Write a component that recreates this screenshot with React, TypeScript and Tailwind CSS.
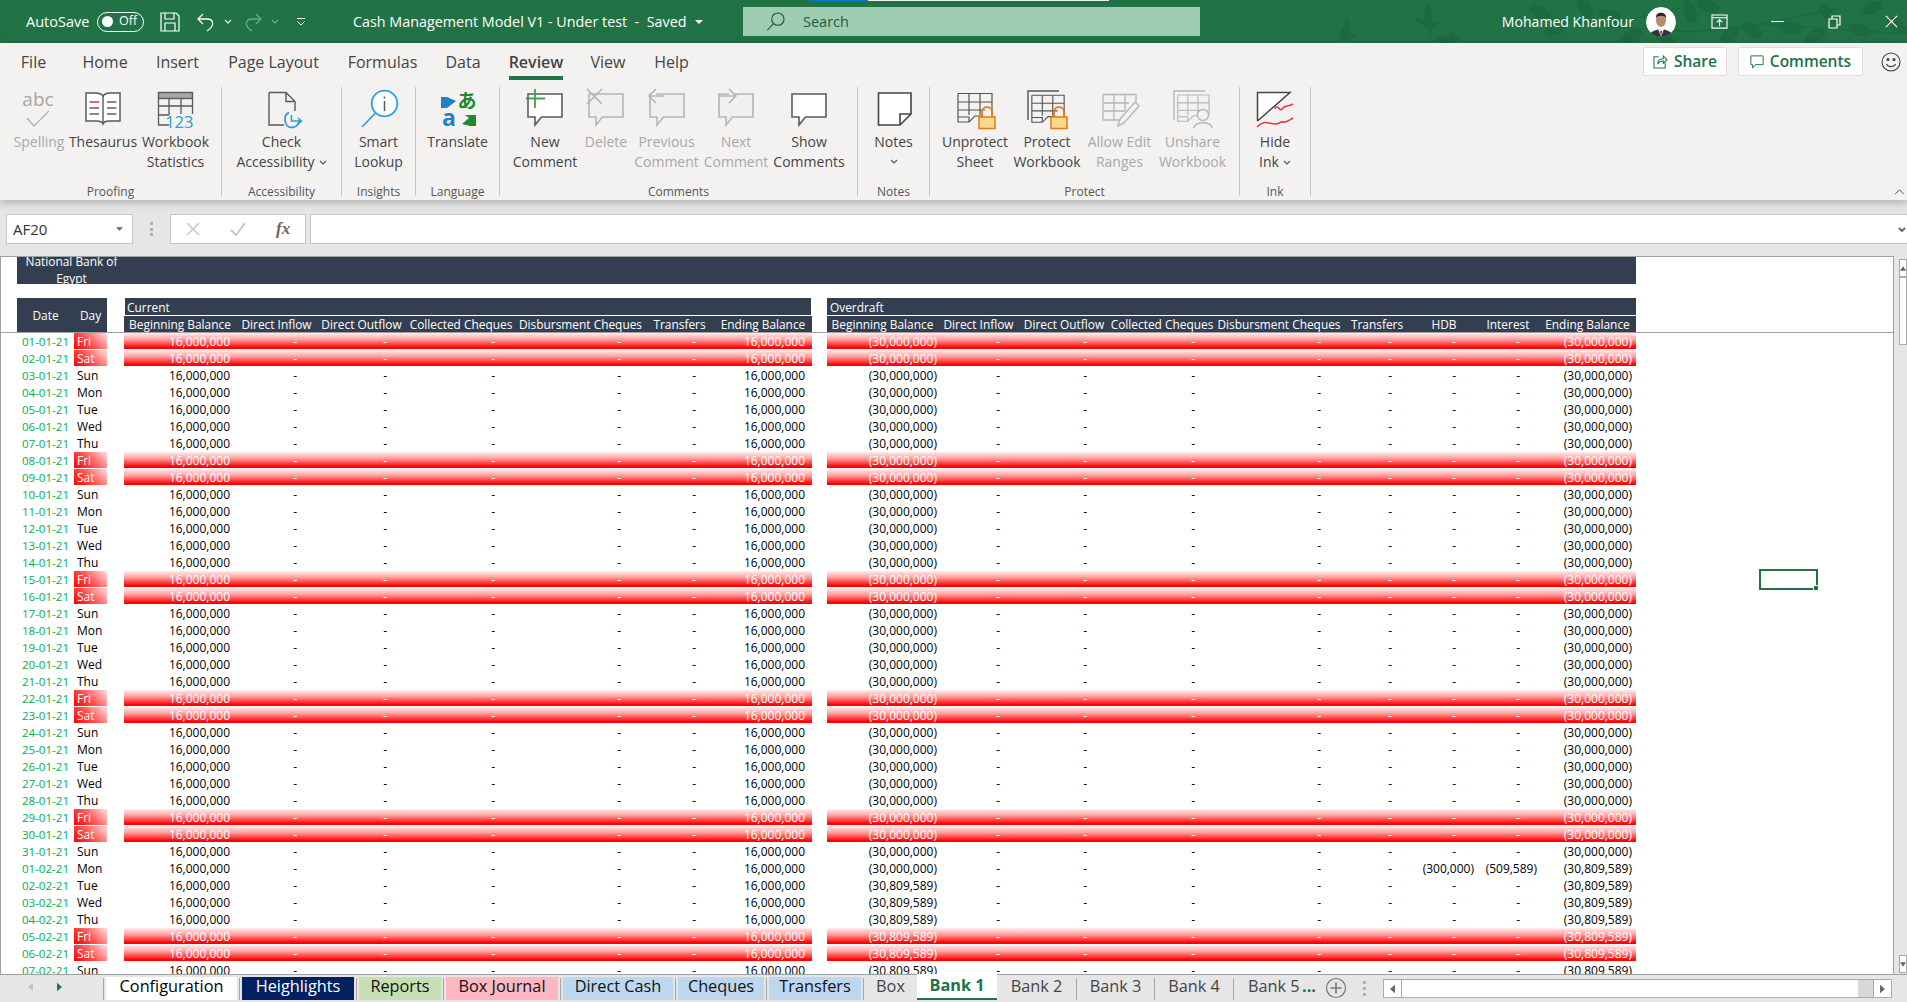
import React from "react";

const D = "#5a5a5a";
const G = "#b5b5b5";
const GF = "#f0f0f0";

function Svg({ children, className = "w-10 h-10 overflow-visible" }: { children: React.ReactNode; className?: string }) {
  return (
    <svg viewBox="0 0 40 40" className={className} fill="none" strokeWidth="1.4">
      {children}
    </svg>
  );
}

const Bubble = ({ c, f = "#ffffff" }: { c: string; f?: string }) => (
  <path d="M3 6H37V29H16.5L10 37V29H3Z" stroke={c} fill={f} strokeWidth="1.6" />
);

const SheetGrid = ({ c, fold = true }: { c: string; fold?: boolean }) => (
  <g stroke={c} strokeWidth="1.2">
    <path d="M3 5.5H37V27" fill="none" />
    <path d="M3 5.5V34H14L20 28H28" fill="none" />
    <path d="M3 14H37M3 22H30M14 5.5V27M25 5.5V27" />
    {fold && <path d="M3 29H14V34" />}
  </g>
);

const Lock = () => (
  <g>
    <path d="M27 29V24C27 17.5 37 17.5 37 24V29" stroke="#e57b13" strokeWidth="1.8" fill="none" />
    <rect x="24" y="29" width="16" height="11.5" fill="#fbd98c" stroke="#e57b13" strokeWidth="1.5" />
  </g>
);

const icons: Record<string, React.ReactNode> = {
  spelling: (
    <Svg>
      <text x="19" y="18" textAnchor="middle" fontSize="19" fill="#a6a6a6" stroke="none" fontFamily="Open Sans">abc</text>
      <path d="M8 30L15 38L30 23" stroke="#b0b0b0" strokeWidth="1.3" />
    </Svg>
  ),
  thesaurus: (
    <Svg>
      <path d="M20 8C18 5.5 16 5 13 5H3V33H14C17 33 19 34 20 36C21 34 23 33 26 33H37V5H27C24 5 22 5.5 20 8Z" stroke={D} strokeWidth="1.5" fill="#fff" />
      <path d="M20 8V35" stroke={D} />
      <path d="M6.5 14H16" stroke="#e8606a" strokeWidth="2" />
      <path d="M6.5 20H16M6.5 26H16M24 14H33.5M24 20H33.5M24 26H33.5" stroke="#8a8a8a" strokeWidth="1.8" />
    </Svg>
  ),
  stats: (
    <Svg>
      <rect x="2.5" y="4.5" width="34" height="6" fill="#a6a6a6" stroke={D} />
      <path d="M2.5 10V37H13M36.5 10V26M2.5 18H36.5M2.5 27H13M13 10V27M25 10V26" stroke={D} strokeWidth="1.3" />
      <rect x="13.5" y="27.5" width="25" height="12" fill="#f3f2f1" />
      <text x="37.5" y="39.5" textAnchor="end" fontSize="16.5" fill="#2e9bd6" stroke="none" fontFamily="Open Sans">123</text>
    </Svg>
  ),
  access: (
    <Svg>
      <path d="M7 4.5H24L33 13.5V23M22 37H7V4.5M24 4.5V13.5H33" stroke={D} strokeWidth="1.4" />
      <path d="M27 25C21 25 21.5 39.5 29.5 39.5C34 39.5 36.5 37 37 33" stroke="#2e9bd6" strokeWidth="1.8" />
      <path d="M29.5 27V33H39M36 30L39.5 33L36 36" stroke="#2e9bd6" strokeWidth="1.6" />
    </Svg>
  ),
  smart: (
    <Svg>
      <circle cx="25.5" cy="15.5" r="12.8" stroke="#2f9fe0" strokeWidth="1.8" fill="#fff" />
      <path d="M16.5 25L3 39" stroke="#2f9fe0" strokeWidth="1.8" />
      <path d="M25.5 13V23" stroke={D} strokeWidth="1.5" />
      <circle cx="25.5" cy="9.5" r="1" fill={D} />
    </Svg>
  ),
  translate: (
    <Svg>
      <path d="M3 9H9L18 13L9 20H3Z" fill="#1f7fc9" />
      <text x="29" y="20" textAnchor="middle" fontSize="19" fill="#1e8a2c" stroke="none" fontFamily="Noto Sans CJK JP" fontWeight="700">あ</text>
      <text x="11" y="38" textAnchor="middle" fontSize="23" fill="#1f7fc9" stroke="none" fontFamily="Open Sans" fontWeight="700">a</text>
      <path d="M24 36L31 30L27 27H38V38H32Z" fill="#1e8a2c" />
    </Svg>
  ),
  newc: (
    <Svg>
      <Bubble c={D} />
      <path d="M10 1V20M1 10.5H20" stroke="#3fa34d" strokeWidth="1.8" />
    </Svg>
  ),
  del: (
    <Svg>
      <Bubble c={G} f={GF} />
      <path d="M1 1L16 16M16 1L1 16" stroke={G} strokeWidth="1.6" />
    </Svg>
  ),
  prev: (
    <Svg>
      <Bubble c={G} f={GF} />
      <path d="M17 8H3M9 1L2 8L9 15" stroke={G} strokeWidth="1.6" fill={GF} />
    </Svg>
  ),
  next: (
    <Svg>
      <Bubble c={G} f={GF} />
      <path d="M3 8H19M13 1L20 8L13 15" stroke={G} strokeWidth="1.6" fill={GF} />
    </Svg>
  ),
  show: (
    <Svg>
      <Bubble c={D} />
    </Svg>
  ),
  note: (
    <Svg>
      <path d="M4.5 5H37V26L26 37H4.5Z" stroke="#444" strokeWidth="1.6" fill="#fff" />
      <path d="M37 26H26V37" stroke="#444" strokeWidth="1.6" />
    </Svg>
  ),
  unprotect: (
    <Svg>
      <SheetGrid c="#555" />
      <Lock />
    </Svg>
  ),
  protect: (
    <Svg>
      <path d="M1 32V3H32" stroke="#555" strokeWidth="1.4" />
      <g transform="translate(2 2) scale(0.95)">
        <SheetGrid c="#555" />
      </g>
      <Lock />
    </Svg>
  ),
  allow: (
    <Svg>
      <g stroke={G} strokeWidth="1.3">
        <path d="M3 6.5H36V14M3 6.5V32H19M3 15H29M3 23H24M14 6.5V32M25 6.5V24" />
      </g>
      <path d="M35 14L39 18L24 35L18 38L20 31Z" stroke={G} strokeWidth="1.4" fill="#f3f2f1" />
    </Svg>
  ),
  unshare: (
    <Svg>
      <path d="M1 32V3H32" stroke={G} strokeWidth="1.3" />
      <g transform="translate(2 2) scale(0.92)">
        <SheetGrid c={G} />
      </g>
      <circle cx="30" cy="27" r="5.5" stroke={G} strokeWidth="1.4" fill="#f3f2f1" />
      <path d="M21 40C21 33 39 33 39 40" stroke={G} strokeWidth="1.4" fill="#f3f2f1" />
    </Svg>
  ),
  ink: (
    <Svg>
      <path d="M2.5 33V4.5H35L2.5 33" stroke="#444" strokeWidth="1.5" fill="#fff" />
      <path d="M20 21C22 14 25 26 28 20C30 17 33 19 38 16" stroke="#e8383d" strokeWidth="1.6" />
      <path d="M2 39C10 31 14 36 20 36C25 36 25 33 28 34C31 35 33 33 38 30" stroke="#e8383d" strokeWidth="1.6" />
    </Svg>
  ),
};

const Chev = ({ className = "" }: { className?: string }) => (
  <svg viewBox="0 0 8 5" className={"w-[8px] h-[5px] " + className} fill="none" stroke="#555" strokeWidth="1.1">
    <path d="M1 1L4 4L7 1" />
  </svg>
);

type Item = { icon: string; l1: string; l2?: React.ReactNode; w: string; off?: boolean };
type Group = { name: string; w: string; pl: string; items: Item[] };

const groups: Group[] = [
  {
    name: "Proofing", w: "w-[222px]", pl: "pl-[8px]",
    items: [
      { icon: "spelling", l1: "Spelling", w: "w-[62px]", off: true },
      { icon: "thesaurus", l1: "Thesaurus", w: "w-[66px]" },
      { icon: "stats", l1: "Workbook", l2: "Statistics", w: "w-[79px]" },
    ],
  },
  {
    name: "Accessibility", w: "w-[120px]", pl: "pl-0",
    items: [{ icon: "access", l1: "Check", l2: <span className="flex items-center gap-[4px]">Accessibility<Chev /></span>, w: "w-[119px]" }],
  },
  { name: "Insights", w: "w-[74px]", pl: "pl-0", items: [{ icon: "smart", l1: "Smart", l2: "Lookup", w: "w-[73px]" }] },
  { name: "Language", w: "w-[84px]", pl: "pl-0", items: [{ icon: "translate", l1: "Translate", w: "w-[83px]" }] },
  {
    name: "Comments", w: "w-[358px]", pl: "pl-[17px]",
    items: [
      { icon: "newc", l1: "New", l2: "Comment", w: "w-[56px]" },
      { icon: "del", l1: "Delete", w: "w-[66px]", off: true },
      { icon: "prev", l1: "Previous", l2: "Comment", w: "w-[55px]", off: true },
      { icon: "next", l1: "Next", l2: "Comment", w: "w-[84px]", off: true },
      { icon: "show", l1: "Show", l2: "Comments", w: "w-[62px]" },
    ],
  },
  { name: "Notes", w: "w-[72px]", pl: "pl-0", items: [{ icon: "note", l1: "Notes", l2: <Chev className="mt-[7px]" />, w: "w-[71px]" }] },
  {
    name: "Protect", w: "w-[310px]", pl: "pl-[9px]",
    items: [
      { icon: "unprotect", l1: "Unprotect", l2: "Sheet", w: "w-[72px]" },
      { icon: "protect", l1: "Protect", l2: "Workbook", w: "w-[72px]" },
      { icon: "allow", l1: "Allow Edit", l2: "Ranges", w: "w-[73px]", off: true },
      { icon: "unshare", l1: "Unshare", l2: "Workbook", w: "w-[73px]", off: true },
    ],
  },
  { name: "Ink", w: "w-[71px]", pl: "pl-0", items: [{ icon: "ink", l1: "Hide", l2: <span className="flex items-center gap-[4px]">Ink<Chev /></span>, w: "w-[70px]" }] },
];

const tabs = [
  { t: "File", w: "w-[67px]" },
  { t: "Home", w: "w-[76px]" },
  { t: "Insert", w: "w-[69px]" },
  { t: "Page Layout", w: "w-[123px]" },
  { t: "Formulas", w: "w-[95px]" },
  { t: "Data", w: "w-[66px]" },
  { t: "Review", w: "w-[80px]", active: true },
  { t: "View", w: "w-[64px]" },
  { t: "Help", w: "w-[63px]" },
];

function TitleBar() {
  const leaves = [
    [1540, 12, 30], [1556, 28, -30], [1585, 8, 60], [1610, 16, 20], [1632, 36, -20], [1665, 38, 40], [1690, 12, 70],
    [1708, 6, 20], [1730, 34, -40], [1752, 30, 30], [1790, 28, 10], [1815, 36, -30], [1828, 14, 50], [1860, 30, 20],
    [1872, 8, -20], [1898, 26, 40],
  ];
  return (
    <div className="relative h-[43px] bg-[#217346] flex items-center text-white text-[14.5px] shrink-0 overflow-hidden">
      <svg className="absolute inset-0 w-[1907px] h-[43px]" viewBox="0 0 1907 43" fill="#1d6a3f">
        <path d="M1338 36C1342 30 1345 26 1346 18C1350 23 1352 28 1350 32L1358 36L1348 38L1344 42Z" />
        <path d="M1413 18L1424 20L1426 4C1432 8 1434 14 1432 21L1442 22L1434 26L1430 36L1425 27Z" />
        <path d="M1436 38L1448 36L1454 30L1456 36L1462 38L1452 43H1440Z" />
        <path d="M1520 26L1560 18L1600 26L1680 8M1600 26L1690 32L1760 24L1907 34M1760 24L1840 8" stroke="#1d6a3f" strokeWidth="1.5" fill="none" />
        {leaves.map(([x, y, r], i) => (
          <ellipse key={i} cx={x} cy={y} rx="12" ry="6" transform={`rotate(${r} ${x} ${y})`} />
        ))}
      </svg>
      <div className="absolute top-0 left-[809px] h-[1px] w-[59px] bg-[#0078d4]" />
      <div className="absolute top-0 left-[868px] h-[1px] w-[241px] bg-[#f0f0f0]" />
      <div className="relative flex items-center w-full">
        <span className="ml-[26px] w-[63px] whitespace-nowrap">AutoSave</span>
        <span className="ml-[8px] w-[47px] h-[20px] rounded-full border border-white flex items-center">
          <span className="ml-[4px] w-[11px] h-[11px] rounded-full bg-white" />
          <span className="ml-[6px] text-[12.5px] leading-none">Off</span>
        </span>
        <svg viewBox="0 0 20 20" className="ml-[16px] w-[20px] h-[20px]" fill="none" stroke="#fff" strokeWidth="1.2">
          <path d="M1 1H16L19 4V19H1Z" />
          <path d="M5 1V7H14V1M5 19V11H15V19" />
        </svg>
        <svg viewBox="0 0 20 20" className="ml-[16px] w-[20px] h-[20px]" fill="none" stroke="#fff" strokeWidth="1.3">
          <path d="M7 2L2 7L7 12" />
          <path d="M2 7H11C18 7 19 14 11 19" />
        </svg>
        <Chev className="ml-[8px] [&_path]:stroke-white" />
        <svg viewBox="0 0 20 20" className="ml-[11px] w-[20px] h-[20px]" fill="none" stroke="#6fa88a" strokeWidth="1.3">
          <path d="M13 2L18 7L13 12" />
          <path d="M18 7H9C2 7 1 14 9 19" />
        </svg>
        <Chev className="ml-[8px] opacity-40 [&_path]:stroke-white" />
        <svg viewBox="0 0 10 10" className="ml-[17px] w-[10px] h-[10px]" fill="none" stroke="#fff" strokeWidth="1">
          <path d="M1 1.5H9M1.5 4.5L5 8L8.5 4.5" />
        </svg>
        <span className="ml-[47px] w-[342px] whitespace-nowrap text-[14.35px]">Cash Management Model V1 - Under test&nbsp; -&nbsp; Saved</span>
        <svg viewBox="0 0 8 4" className="w-[8px] h-[4px]" fill="#fff">
          <path d="M0 0H8L4 4Z" />
        </svg>
        <div className="ml-[40px] w-[457px] h-[29px] bg-[#9fcdb3] flex items-center text-[#1f5c3a]">
          <svg viewBox="0 0 20 20" className="ml-[23px] w-[19px] h-[19px]" fill="none" stroke="#1f5c3a" strokeWidth="1.2">
            <circle cx="12.5" cy="7.5" r="6.5" />
            <path d="M8 12L1.5 19" />
          </svg>
          <span className="ml-[18px]">Search</span>
        </div>
        <span className="ml-auto whitespace-nowrap text-[14.1px]">Mohamed Khanfour</span>
        <svg viewBox="0 0 30 30" className="ml-[12px] w-[30px] h-[30px] rounded-full">
          <circle cx="15" cy="15" r="15" fill="#fff" />
          <path d="M3 30C4 24 9 23 15 22C21 23 26 24 27 30Z" fill="#32343a" />
          <path d="M12 22L15 30L18 22Z" fill="#e8e8e8" />
          <path d="M14.2 24L15 30L15.8 24Z" fill="#22242a" />
          <ellipse cx="15" cy="13" rx="5" ry="7" fill="#b98a6c" />
          <path d="M10 11C9 4 21 4 20 11C19 8 11 8 10 11Z" fill="#2a2320" />
        </svg>
        <svg viewBox="0 0 18 16" className="ml-[35px] w-[17px] h-[15px]" fill="none" stroke="#fff" strokeWidth="1.2">
          <path d="M1 1H17V15H1ZM1 4H17" />
          <path d="M9 13V6M6 9L9 6L12 9" />
        </svg>
        <span className="ml-[43px] w-[13px] h-[1.5px] bg-white" />
        <svg viewBox="0 0 13 14" className="ml-[44px] w-[13px] h-[14px]" fill="none" stroke="#fff" strokeWidth="1.2">
          <path d="M1 4H9V13H1ZM4 4V1H12V10H9" />
        </svg>
        <svg viewBox="0 0 14 14" className="ml-[44px] mr-[9px] w-[13px] h-[13px]" fill="none" stroke="#fff" strokeWidth="1.2">
          <path d="M1 1L13 13M13 1L1 13" />
        </svg>
      </div>
    </div>
  );
}

function Ribbon() {
  return (
    <div className="relative z-10 h-[157px] bg-[#f3f2f1] shadow-[0_2px_9px_rgba(0,0,0,0.28)] shrink-0">
      <div className="h-[39px] flex items-start text-[16px] text-[#444444]">
        {tabs.map((t) => (
          <div key={t.t} className={t.w + " flex justify-center"}>
            <span className={"h-[37px] leading-[38px] whitespace-nowrap " + (t.active ? "font-semibold border-b-[4px] border-[#217346]" : "")}>{t.t}</span>
          </div>
        ))}
        <div className="ml-auto flex items-center pt-[4px]">
          <button className="w-[84px] h-[29px] bg-white border border-[#e1dfdd] rounded-[2px] flex items-center justify-center gap-[6px] text-[#217346] font-semibold text-[15.5px]">
            <svg viewBox="0 0 16 16" className="w-[15px] h-[15px]" fill="none" stroke="#217346" strokeWidth="1.1">
              <path d="M6 3H1V15H13V9M5 11C5 6 8 5 11 5V2L15 6L11 10V7.5C8.5 7.5 6.5 8 5 11Z" />
            </svg>
            Share
          </button>
          <button className="ml-[11px] w-[125px] h-[29px] bg-white border border-[#e1dfdd] rounded-[2px] flex items-center justify-center gap-[6px] text-[#217346] font-semibold text-[15.5px]">
            <svg viewBox="0 0 16 16" className="w-[14px] h-[14px]" fill="none" stroke="#217346" strokeWidth="1.1">
              <path d="M1 1H15V11H6L3 15V11H1Z" />
            </svg>
            Comments
          </button>
          <svg viewBox="0 0 20 20" className="ml-[18px] mr-[6px] w-[20px] h-[20px]" fill="none" stroke="#444" strokeWidth="1.1">
            <circle cx="10" cy="10" r="9" />
            <path d="M5.5 12C7 15.5 13 15.5 14.5 12" />
            <circle cx="7" cy="7.5" r="1" fill="#444" />
            <circle cx="13" cy="7.5" r="1" fill="#444" />
          </svg>
        </div>
      </div>
      <div className="flex pt-[5px] text-[14px] leading-[20px] text-[#444444]">
        {groups.map((g) => (
          <div key={g.name} className={g.w + " h-[109px] border-r border-[#c8c6c4] shrink-0"}>
            <div className={"h-[97px] flex " + g.pl}>
              {g.items.map((it) => (
                <div key={it.l1 + it.icon} className={it.w + " flex flex-col items-center whitespace-nowrap shrink-0 " + (it.off ? "text-[#a8a8a8]" : "")}>
                  <div className="h-[45px] pt-[1px]">{icons[it.icon]}</div>
                  <span>{it.l1}</span>
                  {it.l2 && <span className="flex flex-col items-center">{it.l2}</span>}
                </div>
              ))}
            </div>
            <div className="h-[12px] leading-[16px] text-center text-[12px] text-[#555555]">{g.name}</div>
          </div>
        ))}
      </div>
      <svg viewBox="0 0 12 7" className="absolute right-[2px] bottom-[5px] w-[11px] h-[6px]" fill="none" stroke="#444" strokeWidth="1.1">
        <path d="M1 6L6 1L11 6" />
      </svg>
    </div>
  );
}

function FormulaBar() {
  return (
    <div className="h-[56px] bg-[#e6e6e6] pt-[14px] flex items-start shrink-0">
      <div className="ml-[6px] w-[127px] h-[30px] bg-white border border-[#c6c6c6] flex items-center text-[15px] text-[#333333]">
        <span className="ml-[6px]">AF20</span>
        <svg viewBox="0 0 8 4" className="ml-auto mr-[9px] w-[7px] h-[4px]" fill="#666">
          <path d="M0 0H8L4 4Z" />
        </svg>
      </div>
      <div className="ml-[17px] mt-[8px] w-[3px] h-[14px] flex flex-col justify-between">
        <span className="h-[3px] bg-[#b0b0b0]" />
        <span className="h-[3px] bg-[#b0b0b0]" />
        <span className="h-[3px] bg-[#b0b0b0]" />
      </div>
      <div className="ml-[17px] w-[136px] h-[30px] bg-white border border-[#c6c6c6] flex items-center">
        <svg viewBox="0 0 14 14" className="ml-[15px] w-[14px] h-[14px]" fill="none" stroke="#c8c8c8" strokeWidth="1.6">
          <path d="M1 1L13 13M13 1L1 13" />
        </svg>
        <svg viewBox="0 0 16 14" className="ml-[30px] w-[16px] h-[14px]" fill="none" stroke="#c8c8c8" strokeWidth="2">
          <path d="M1 8L6 13L15 1" />
        </svg>
        <span className="ml-[30px] text-[17px] italic font-['Liberation_Serif',serif] text-[#666666] font-bold">fx</span>
      </div>
      <div className="ml-[4px] flex-1 h-[30px] bg-white border-y border-l border-[#c6c6c6] flex items-center justify-end">
        <svg viewBox="0 0 8 5" className="mr-[1px] w-[8px] h-[5px]" fill="none" stroke="#666" strokeWidth="2">
          <path d="M1 1L4 4L7 1" />
        </svg>
      </div>
    </div>
  );
}

const curCols = [
  { h: "Beginning Balance", w: "w-[112px]", pr: "pr-[6px]" },
  { h: "Direct Inflow", w: "w-[81px]", pr: "pr-[20px]" },
  { h: "Direct Outflow", w: "w-[89px]", pr: "pr-[19px]" },
  { h: "Collected Cheques", w: "w-[110px]", pr: "pr-[21px]" },
  { h: "Disbursment Cheques", w: "w-[129px]", pr: "pr-[24px]" },
  { h: "Transfers", w: "w-[69px]", pr: "pr-[18px]" },
  { h: "Ending Balance", w: "w-[98px]", pr: "pr-[7px]" },
];
const odCols = [
  { h: "Beginning Balance", w: "w-[111px]", pr: "pr-[1px]" },
  { h: "Direct Inflow", w: "w-[81px]", pr: "pr-[19px]" },
  { h: "Direct Outflow", w: "w-[90px]", pr: "pr-[22px]" },
  { h: "Collected Cheques", w: "w-[106px]", pr: "pr-[20px]" },
  { h: "Disbursment Cheques", w: "w-[128px]", pr: "pr-[22px]" },
  { h: "Transfers", w: "w-[68px]", pr: "pr-[19px]" },
  { h: "HDB", w: "w-[66px]", pr: "pr-[21px]", vpr: "pr-[3px]" },
  { h: "Interest", w: "w-[62px]", pr: "pr-[19px]", vpr: "pr-[2px]" },
  { h: "Ending Balance", w: "w-[97px]", pr: "pr-[4px]" },
];

const pad = (n: number) => String(n).padStart(2, "0");
const days = ["Sun", "Mon", "Tue", "Wed", "Thu", "Fri", "Sat"];
const rows = Array.from({ length: 38 }, (_, i) => {
  const d = new Date(Date.UTC(2021, 0, 1 + i));
  const day = days[d.getUTCDay()];
  return {
    i,
    date: `${pad(d.getUTCDate())}-${pad(d.getUTCMonth() + 1)}-21`,
    day,
    off: day === "Fri" || day === "Sat",
  };
});

const RED = "bg-[linear-gradient(180deg,#ffeeee_0%,#ffa0a0_40%,#ff0000_92%)] text-white";

function Row({ r }: { r: (typeof rows)[number] }) {
  const begin = r.i <= 31 ? "(30,000,000)" : "(30,809,589)";
  const end = r.i < 31 ? "(30,000,000)" : "(30,809,589)";
  const od = [begin, "-", "-", "-", "-", "-", r.i === 31 ? "(300,000)" : "-", r.i === 31 ? "(509,589)" : "-", end];
  const cur = ["16,000,000", "-", "-", "-", "-", "-", "16,000,000"];
  const tone = r.off ? RED : "text-black";
  return (
    <div className="flex h-[17px] pl-[16px] leading-[18px] whitespace-nowrap text-[12px]">
      <div className="w-[57px] text-center text-[#00b050] text-[11.6px]">{r.date}</div>
      <div className={"w-[33px] h-[16px] pl-[3px] " + (r.off ? "bg-[linear-gradient(45deg,#ff0000_0%,#ff5050_45%,#ffe0e0_100%)] text-white" : "text-black")}>{r.day}</div>
      <div className={"ml-[17px] w-[688px] h-[16px] flex " + tone}>
        {cur.map((v, i) => (
          <div key={i} className={curCols[i].w + " text-right " + curCols[i].pr}>{v}</div>
        ))}
      </div>
      <div className={"ml-[15px] w-[809px] h-[16px] flex " + tone}>
        {od.map((v, i) => {
          const c = odCols[i];
          return (
            <div key={i} className={c.w + " text-right " + (v !== "-" && c.vpr ? c.vpr : c.pr)}>{v}</div>
          );
        })}
      </div>
    </div>
  );
}

const V = ({ up }: { up?: boolean }) => (
  <div className="h-[18px] bg-white border border-[#ababab] flex items-center justify-center shrink-0">
    <svg viewBox="0 0 8 6" className="w-[6px] h-[5px]" fill="#666">
      <path d={up ? "M4 0L8 6H0Z" : "M0 0H8L4 6Z"} />
    </svg>
  </div>
);

function Sheet() {
  return (
    <div className="h-[718px] flex bg-[#e6e6e6] shrink-0">
      <div className="relative w-[1894px] border-t border-x border-[#a0a0a0] bg-white overflow-hidden text-[11.9px] font-['Open_Sans',sans-serif]">
        <div className="ml-[16px] w-[1619px] h-[27px] bg-[#333f50] overflow-hidden text-white">
          <div className="w-[109px] text-center leading-[17px] -mt-[4px]">
            National Bank of
            <br />
            Egypt
          </div>
        </div>
        <div className="mt-[14px] h-[35px] pl-[16px] flex border-b border-[#a0a0a0] text-white whitespace-nowrap">
          <div className="w-[90px] h-[34px] bg-[#333f50] flex items-center pt-[2px]">
            <span className="w-[57px] text-center">Date</span>
            <span className="w-[33px] text-center">Day</span>
          </div>
          <div className="ml-[17px] w-[688px]">
            <div className="mx-[1px] h-[17px] mb-[1px] bg-[#333f50] pl-[2px] leading-[19px]">Current</div>
            <div className="h-[16px] bg-[#333f50] flex leading-[17px]">
              {curCols.map((c) => (
                <div key={c.h} className={c.w + " text-center"}>{c.h}</div>
              ))}
            </div>
          </div>
          <div className="ml-[15px] w-[809px]">
            <div className="h-[17px] mb-[1px] bg-[#333f50] pl-[3px] leading-[19px]">Overdraft</div>
            <div className="h-[16px] bg-[#333f50] flex leading-[17px]">
              {odCols.map((c) => (
                <div key={c.h} className={c.w + " text-center"}>{c.h}</div>
              ))}
            </div>
          </div>
        </div>
        {rows.map((r) => (
          <Row key={r.i} r={r} />
        ))}
        <div className="absolute left-[1758px] top-[312px] w-[59px] h-[21px] border-2 border-[#217346]">
          <div className="absolute -right-[3px] -bottom-[3px] w-[6px] h-[6px] bg-[#217346] border border-white" />
        </div>
      </div>
      <div className="ml-[5px] flex-1 pt-[3px] pb-[1px] flex flex-col">
        <V up />
        <div className="h-[68px] bg-white border border-[#ababab] shrink-0" />
        <div className="flex-1" />
        <V />
      </div>
    </div>
  );
}

const sheetTabs = [
  { t: "Configuration", c: "w-[131px] bg-white text-black" },
  { t: "Heighlights", c: "w-[112px] bg-[#002060] text-white" },
  { t: "Reports", c: "w-[82px] bg-[#c6e0b4] text-[#111111]" },
  { t: "Box Journal", c: "w-[112px] bg-[#ffb7c1] text-[#111111]" },
  { t: "Direct Cash", c: "w-[110px] bg-[#bdd7ee] text-[#111111]" },
  { t: "Cheques", c: "w-[86px] bg-[#bdd7ee] text-[#111111]" },
  { t: "Transfers", c: "w-[92px] bg-[#bdd7ee] text-[#111111]" },
  { t: "Box", c: "w-[49px] text-[#444444]" },
];
const plainTabs = [
  { t: "Bank 2", c: "w-[75px]" },
  { t: "Bank 3", c: "w-[73px]" },
  { t: "Bank 4", c: "w-[74px]" },
];

const Tri = ({ d, c, cls }: { d: string; c: string; cls: string }) => (
  <svg viewBox="0 0 6 10" className={"w-[5px] h-[10px] " + cls} fill={c}>
    <path d={d} />
  </svg>
);

function TabStrip() {
  return (
    <div className="h-[28px] bg-[#e6e6e6] border-t border-[#a0a0a0] flex items-start text-[16.3px] shrink-0 whitespace-nowrap">
      <div className="w-[103px] h-[24px] flex items-center">
        <Tri d="M6 0V10L0 5Z" c="#c4c4c4" cls="ml-[28px]" />
        <Tri d="M0 0V10L6 5Z" c="#217346" cls="ml-[24px]" />
      </div>
      <div className="flex items-start gap-[2px]">
        {sheetTabs.map((t) => (
          <React.Fragment key={t.t}>
            <span className="w-[1px] h-[22px] mt-[3px] bg-[#a6a6a6]" />
            <div className={t.c + " h-[23px] mt-[2px] leading-[18px] text-center"}>{t.t}</div>
          </React.Fragment>
        ))}
        <div className="w-[80px] h-[26px] -mt-[1px] bg-white border-b-2 border-[#217346] text-center font-bold text-[#217346] leading-[23px]">Bank 1</div>
        {plainTabs.map((t) => (
          <React.Fragment key={t.t}>
            <div className={t.c + " h-[23px] mt-[2px] leading-[18px] text-center text-[#444444]"}>{t.t}</div>
            <span className="w-[1px] h-[22px] mt-[3px] bg-[#a6a6a6]" />
          </React.Fragment>
        ))}
        <div className="w-[80px] h-[23px] mt-[2px] leading-[18px] text-[#444444] flex">
          <span className="ml-[12px] w-[54px] overflow-hidden">Bank 5</span>
          <span className="text-[#217346] font-bold">...</span>
        </div>
      </div>
      <svg viewBox="0 0 22 22" className="ml-[9px] mt-[2px] w-[22px] h-[22px]" fill="none" stroke="#777" strokeWidth="1.2">
        <circle cx="11" cy="11" r="9.5" />
        <path d="M11 5.5V16.5M5.5 11H16.5" strokeWidth="1.6" />
      </svg>
      <div className="ml-[16px] mt-[6px] w-[3px] h-[15px] flex flex-col justify-between">
        <span className="h-[3px] bg-[#b0b0b0]" />
        <span className="h-[3px] bg-[#b0b0b0]" />
        <span className="h-[3px] bg-[#b0b0b0]" />
      </div>
      <div className="ml-[17px] mt-[4px] w-[509px] h-[19px] bg-[#d8d8d8] border border-[#ababab] flex">
        <div className="w-[18px] bg-white border-r border-[#ababab] flex items-center justify-center">
          <Tri d="M6 0V10L0 5Z" c="#666" cls="" />
        </div>
        <div className="w-[456px] bg-white" />
        <div className="ml-auto w-[18px] bg-white border-l border-[#ababab] flex items-center justify-center">
          <Tri d="M0 0V10L6 5Z" c="#666" cls="" />
        </div>
      </div>
    </div>
  );
}

export default function App() {
  return (
    <div className="w-[1907px] h-[1002px] overflow-hidden flex flex-col font-['Open_Sans',sans-serif]">
      <TitleBar />
      <Ribbon />
      <FormulaBar />
      <Sheet />
      <TabStrip />
    </div>
  );
}
